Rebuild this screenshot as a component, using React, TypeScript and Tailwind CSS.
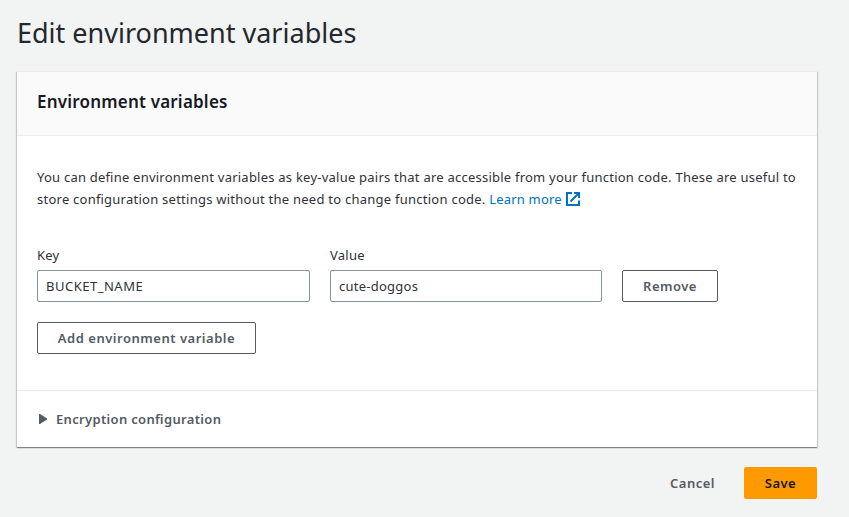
import React from "react";

function ExternalIcon() {
  return (
    <svg className="ml-[3px] inline-block h-4 w-4 align-[-3px]" viewBox="0 0 16 16" fill="none" stroke="#0073bb" strokeWidth="2">
      <path d="M7 2H2v12h12V9.5" />
      <path d="M9 2h5v5" />
      <path d="M5.5 10.5L13.5 2.5" />
    </svg>
  );
}

function Field({ label, value, className, inputClassName }: { label: string; value: string; className: string; inputClassName: string }) {
  return (
    <label className={`flex flex-col ${className}`}>
      <span className="h-[22px] leading-[22px] tracking-[0.25px] text-[#2f3238]">{label}</span>
      <input
        className={`mt-1 h-8 w-full rounded-[2px] border border-[#879596] bg-white px-2 text-[#2f3238] outline-none ${inputClassName}`}
        defaultValue={value}
      />
    </label>
  );
}

export default function App() {
  return (
    <main className="h-[517px] w-[849px] overflow-hidden bg-[#f2f3f3] pl-[17px] pr-8 font-['Noto_Sans',sans-serif] text-[13px] text-[#16191f] [font-feature-settings:'liga'_1]">
      <h1 className="pt-[15px] text-[27px] leading-9 whitespace-nowrap text-[#24272e]">
        Edit environment variables
      </h1>
      <section className="mt-5 h-[376px] border-t border-[#eaeded] bg-white shadow-[0_1px_1px_0_rgba(0,28,36,0.3),1px_1px_1px_0_rgba(0,28,36,0.15),-1px_1px_1px_0_rgba(0,28,36,0.15)]">
        <header className="flex h-16 items-center border-b border-[#eaeded] bg-[#fafafa] px-5 pb-1">
          <h2 className="text-[17px] leading-[22px] font-semibold tracking-[0.2px]">Environment variables</h2>
        </header>
        <div className="h-[255px] border-b border-[#eaeded] px-5 pt-[30px]">
          <p className="leading-[22px] whitespace-nowrap text-[#2f3238]">
            <span className="tracking-[0.233px]">You can define environment variables as key-value pairs that are accessible from your function code. These are useful to</span>
            <br />
            <span className="tracking-[0.25px]">store configuration settings without the need to change function code. </span>
            <a className="tracking-[0.2px] text-[#0073bb]">Learn more</a>
            <ExternalIcon />
          </p>
          <div className="mt-[34px] flex items-end gap-5">
            <Field label="Key" value="BUCKET_NAME" className="w-[273px]" inputClassName="tracking-[0.5px]" />
            <Field label="Value" value="cute-doggos" className="w-[272px]" inputClassName="tracking-[0.25px]" />
            <button className="h-8 w-24 rounded-[2px] border border-[#545b64] pt-[2px] font-semibold tracking-[0.5px] text-[#545b64]">Remove</button>
          </div>
          <button className="mt-5 h-8 w-[219px] rounded-[2px] border border-[#545b64] pt-[2px] font-semibold tracking-[0.52px] text-[#545b64]">Add environment variable</button>
        </div>
        <div className="flex h-14 items-center px-5 font-semibold text-[#545b64]">
          <svg className="ml-[2px] mr-[9px] h-[10px] w-2" viewBox="0 0 8 10" fill="#545b64">
            <path d="M0 0H1L8 4.5V5.5L1 10H0Z" />
          </svg>
          <span className="pt-[2px] tracking-[0.33px]">Encryption configuration</span>
        </div>
      </section>
      <div className="mt-5 flex h-8 items-center justify-end font-semibold">
        <button className="mr-[29px] pt-[2px] tracking-[0.5px] text-[#545b64]">Cancel</button>
        <button className="h-8 w-[73px] rounded-[2px] bg-[#ff9900] pt-[2px] tracking-[0.5px]">Save</button>
      </div>
    </main>
  );
}
